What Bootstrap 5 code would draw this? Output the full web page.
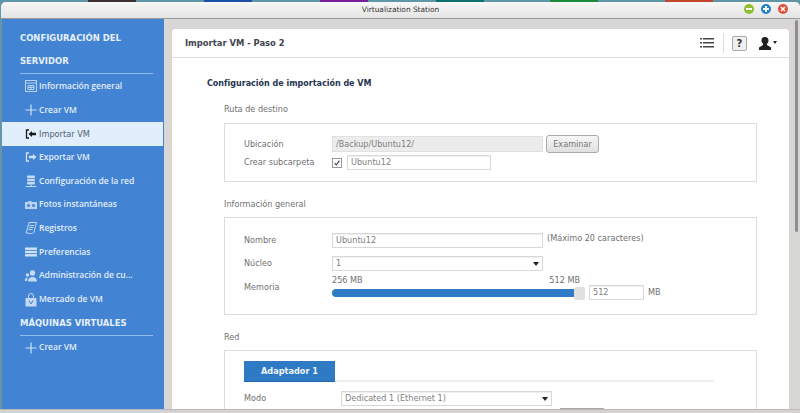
<!DOCTYPE html>
<html lang="es">
<head>
<meta charset="utf-8">
<title>Virtualization Station</title>
<link href="https://cdn.jsdelivr.net/npm/bootstrap@5.3.0/dist/css/bootstrap.min.css" rel="stylesheet">
<style>
html,body{height:413px;overflow:hidden}
body{background:#5f96a8;font-family:"DejaVu Sans",sans-serif;font-size:8.15px;color:#707070;position:relative}
.wall{height:2px}
.wall i{position:absolute;top:0;height:2px}
.vs-win{height:411px;margin-left:1px;background:#d9d7d5;border-radius:5px 5px 0 0;overflow:hidden}
.vs-title{height:17px;background:linear-gradient(#f7f7f7,#e4e4e4);border-bottom:1px solid #9a9a9a;font-size:7.4px;color:#333;position:relative}
.vs-dots{position:absolute;right:12px;top:2px;gap:7px}
.vs-dots svg{display:block}
.vs-body{height:390px}
.vs-side{width:163px;background:#4284d3;border-left:1px solid #6d93ad;color:#e8f1fb;flex:none}
.vs-head{margin:8px 11px .5px 18px;font-weight:700;color:#e6f0fb;font-size:8.45px;line-height:23px;border-bottom:1px solid #8fbcec}
.vs-head.second{margin-top:0;line-height:24px}
.vs-item{height:23.7px;padding-left:22px;gap:1px;font-family:"Open Sans",sans-serif;font-weight:600;font-size:8.5px;color:#e2edfa;white-space:nowrap}
.vs-item svg{width:14px;height:14px;flex:none}
.vs-item.on{background:#e1effc;color:#55616f;font-family:"DejaVu Sans",sans-serif;font-weight:400;font-size:8.2px;margin-right:1px}
.vs-item.tight{margin-top:-1px}
.vs-main{flex:1;padding:10px 0 0 8px;min-width:0}
.vs-panel{width:617px;height:400px;background:#fff;border-radius:4px 4px 0 0}
.vs-phead{height:29px;border-bottom:1px solid #ddd;padding:0 11px 0 13px;font-weight:700;font-size:8.4px;color:#3e4450}
.vs-sep{width:1px;height:20px;background:#ddd;margin:0 8px 0 9px}
.vs-q{width:15px;height:15px;border:1px solid #aaa;border-radius:2px;background:#f0f0f0;color:#333;font-size:10px;font-weight:700;line-height:13px;text-align:center;margin-right:11px}
.vs-content{padding:20px 33px 0 35px}
.vs-h{font-weight:700;color:#243450;font-size:8px;line-height:12px;margin-bottom:13px}
.vs-sec{margin-left:17px;line-height:12px;margin-bottom:7px}
.vs-sec.first{margin-bottom:8px}
.vs-box{margin-left:17px;border:1px solid #dcdcdc;padding:0 19px;width:533px;margin-bottom:16px}
.vs-box-a{height:59px;padding-top:11px}
.vs-box-b{height:98px;padding-top:15px}
.vs-box-c{height:80px;padding-top:10px}
.vs-row{display:flex;align-items:center}
.vs-lbl{width:88px;flex:none}
.vs-in{height:15px;border:1px solid #d8d8d8;background:#fff;padding:0 3px;line-height:13px;color:#808080;flex:none;display:flex;align-items:center;justify-content:space-between;box-shadow:inset 0 1px 1px #eee}
.vs-gray{background:#ececec;border-color:#e0e0e0;height:16px}
.vs-btn{width:53px;height:18px;border:1px solid #aaa;border-radius:3px;background:linear-gradient(#f6f6f6,#e0e0e0);color:#777;margin-left:3px;display:flex;align-items:center;justify-content:center}
.vs-chk{width:10px;height:10px;border:1px solid #999;background:#fff;margin-right:5px;flex:none;display:block}
.vs-w211{width:211px}
.vs-caret{width:0;height:0;border-left:3px solid transparent;border-right:3px solid transparent;border-top:4px solid #222}
.vs-track{width:253px;height:13px;position:relative;flex:none;margin-top:1px}
.vs-fill{position:absolute;left:0;top:2px;height:8px;width:242px;background:#2f7ac5;border-radius:4px 0 0 4px}
.vs-knob{position:absolute;left:242px;top:0;width:11px;height:13px;background:#e0e0e0;border-radius:2px}
.vs-ends{width:248px;display:flex;justify-content:space-between;line-height:11px}
.vs-tab{width:91px;height:21px;background:#2f7ac5;color:#eef5fc;font-weight:700;font-size:8.2px;display:flex;align-items:center;justify-content:center;border-bottom:1px solid #1f68b0}
.vs-tabline{border-bottom:2px solid #eee;flex:0 0 379px;height:21px}
.vs-scroll{position:absolute;left:795px;top:20px;width:3px;height:212px;background:#8d8d8d;border-radius:2px}
.vs-bottom{position:absolute;left:0;right:0;top:409px;height:4px;background:#d5d3d1;border-top:1px solid #b9b9b9}
.vs-strip{position:absolute;left:789px;top:19px;width:11px;height:390px;background:#d9d7d5}
.vs-edge{position:absolute;left:560px;top:408px;width:44px;height:1px;background:#aaa}
.vs-note{margin-left:4px;margin-top:-4px}
.vs-mem{margin-top:6px}
.vs-memr{margin-top:10px}
.vs-memr .vs-in{width:55px;margin-left:4px}
.vs-memr span{margin-left:4px}
.vs-h15{height:15px}
.vs-mb8{margin-bottom:8px}
.vs-mb4{margin-bottom:4px}
.vs-top{align-items:flex-start}
.vs-modo{margin-top:9px}
.vs-modo .vs-lbl{width:97px}
.vs-r18{height:18px;margin-bottom:2px}
.vs-w144{width:144px}
</style>
</head>
<body>
<div class="wall">
<i style="left:88px;width:48px;background:#3a3030"></i>
<i style="left:204px;width:48px;background:#1b4fa8"></i>
<i style="left:320px;width:48px;background:#7a1f9c"></i>
<i style="left:436px;width:48px;background:#0f7070"></i>
<i style="left:550px;width:48px;background:#1b8a3a"></i>
<i style="left:665px;width:48px;background:#c5442c"></i>
</div>
<div class="vs-win">
<div class="vs-title d-flex align-items-center justify-content-center">Virtualization Station
<div class="vs-dots d-flex">
<svg width="10" height="10" viewBox="0 0 10 10"><circle cx="5" cy="5" r="5" fill="#8fbf2e"/><rect x="2" y="4" width="6" height="2" fill="#fff"/></svg>
<svg width="10" height="10" viewBox="0 0 10 10"><circle cx="5" cy="5" r="5" fill="#1f7fc9"/><path d="M2 4h2V2h2v2h2v2H6v2H4V6H2z" fill="#fff"/></svg>
<svg width="10" height="10" viewBox="0 0 10 10"><circle cx="5" cy="5" r="5" fill="#e2503c"/><path d="M3 3l4 4M7 3l-4 4" stroke="#fff" stroke-width="1.6"/></svg>
</div>
</div>
<div class="vs-body d-flex">
<nav class="vs-side">
<div class="vs-head">CONFIGURACIÓN DEL<br>SERVIDOR</div>
<div>
<div class="vs-item d-flex align-items-center"><svg viewBox="0 0 14 14" fill="none" stroke="#b9d3f2"><rect x="1.500" y="1.500" width="11" height="11"/><path d="M1.500 4h11M4 6.500h6v4H4zM4 8.500h6M7 6.500v4"/></svg>Información general</div>
<div class="vs-item d-flex align-items-center"><svg viewBox="0 0 14 14" stroke="#cfe2f8" stroke-width="1.200"><path d="M7 1.500v11M1.500 7h11"/></svg>Crear VM</div>
<div class="vs-item on d-flex align-items-center"><svg viewBox="0 0 14 14" fill="none" stroke="#1a1a1a"><path d="M5 3H2.500v8H5" stroke-width="1.300"/><path d="M4.500 7l3.500-3v1.800h4v2.400H8V10z" fill="#1a1a1a" stroke="none"/></svg>Importar VM</div>
<div class="vs-item d-flex align-items-center"><svg viewBox="0 0 14 14" fill="none" stroke="#cfe2f8"><path d="M5 3H2.500v8H5" stroke-width="1.300"/><path d="M12.500 7L9 4v1.800H5v2.400h4V10z" fill="#cfe2f8" stroke="none"/></svg>Exportar VM</div>
<div class="vs-item d-flex align-items-center"><svg viewBox="0 0 14 14" fill="#c3d9f4"><rect x="3" y="1.500" width="8" height="2.500" rx="1"/><rect x="3" y="4.800" width="8" height="2.500" rx="1"/><rect x="3" y="8" width="8" height="2.500" rx="1"/><rect x="6.500" y="10.500" width="1" height="2"/><rect x="1.500" y="12" width="11" height="1"/></svg>Configuración de la red</div>
<div class="vs-item d-flex align-items-center"><svg viewBox="0 0 14 14" fill="#b9d3f2"><path d="M1 4h3l1-1h2l1 1h5v7H1z"/><circle cx="4.500" cy="7.500" r="1.500" fill="#4284d3"/><circle cx="9.500" cy="7.500" r="1.500" fill="#4284d3"/></svg>Fotos instantáneas</div>
<div class="vs-item d-flex align-items-center"><svg viewBox="0 0 14 14" fill="none" stroke="#c3d9f4"><path d="M5 1.500h7.500L10 11c-.5 1.500-2 2-3.500 1.500L2 12l1-3z"/><path d="M5.500 4.500h4.500M5 6.500h4.500M4.500 8.500h4"/></svg>Registros</div>
<div class="vs-item d-flex align-items-center"><svg viewBox="0 0 14 14" fill="#cfe2f8"><rect x="1" y="2.500" width="12" height="2.400"/><rect x="1" y="5.800" width="12" height="2.400"/><rect x="1" y="9.100" width="12" height="2.400"/></svg>Preferencias</div>
<div class="vs-item d-flex align-items-center"><svg viewBox="0 0 14 14" fill="#c3d9f4"><circle cx="8.500" cy="4" r="2.700"/><path d="M4 12.500c0-3 2-4.500 4.500-4.500s4.500 1.500 4.500 4.500z"/><circle cx="3.500" cy="6" r="1.800"/><path d="M.8 12c0-2 1-3.500 2.700-3.500L3 12z"/></svg>Administración de cu...</div>
<div class="vs-item d-flex align-items-center"><svg viewBox="0 0 14 14" fill="#c3d9f4"><path d="M1.500 5h11v8.500h-11z"/><path d="M4.500 5V3a2.500 2.500 0 015 0v2" fill="none" stroke="#c3d9f4"/><path d="M5 7.500l2 3.500 2-3.500" fill="none" stroke="#4284d3"/></svg>Mercado de VM</div>
</div>
<div class="vs-head second">MÁQUINAS VIRTUALES</div>
<div class="vs-item tight d-flex align-items-center"><svg viewBox="0 0 14 14" stroke="#cfe2f8" stroke-width="1.200"><path d="M7 1.500v11M1.500 7h11"/></svg>Crear VM</div>
</nav>
<main class="vs-main">
<div class="vs-panel">
<div class="vs-phead d-flex align-items-center justify-content-between">
<span>Importar VM - Paso 2</span>
<div class="d-flex align-items-center">
<svg width="14" height="10" viewBox="0 0 14 10" fill="#444"><rect y="0" width="2" height="1.500"/><rect x="3" y="0" width="11" height="1.500"/><rect y="4" width="2" height="1.500"/><rect x="3" y="4" width="11" height="1.500"/><rect y="8" width="2" height="1.500"/><rect x="3" y="8" width="11" height="1.500"/></svg>
<div class="vs-sep"></div>
<div class="vs-q">?</div>
<svg width="20" height="13" viewBox="0 0 20 13" fill="#222"><circle cx="7" cy="3.500" r="3.500"/><path d="M5 6h4v2l4 2.500V13H1v-2.500L5 8z"/><path d="M15 4h4l-2 3z"/></svg>
</div>
</div>
<div class="vs-content">
<div class="vs-h">Configuración de importación de VM</div>
<div class="vs-sec first">Ruta de destino</div>
<div class="vs-box vs-box-a">
<div class="vs-row vs-r18"><div class="vs-lbl">Ubicación</div><div class="vs-in vs-gray vs-w211">/Backup/Ubuntu12/</div><div class="vs-btn">Examinar</div></div>
<div class="vs-row vs-h15"><div class="vs-lbl">Crear subcarpeta</div>
<svg class="vs-chk" viewBox="0 0 10 10" fill="none" stroke="#333" stroke-width="1.300"><path d="M2 5l2 2.500L8 2"/></svg>
<div class="vs-in vs-w144">Ubuntu12</div></div>
</div>
<div class="vs-sec">Información general</div>
<div class="vs-box vs-box-b">
<div class="vs-row vs-h15 vs-mb8"><div class="vs-lbl">Nombre</div><div class="vs-in vs-w211">Ubuntu12</div><span class="vs-note">(Máximo 20 caracteres)</span></div>
<div class="vs-row vs-h15 vs-mb4"><div class="vs-lbl">Núcleo</div><div class="vs-in vs-w211">1<i class="vs-caret"></i></div></div>
<div class="vs-row vs-top">
<div class="vs-lbl vs-mem">Memoria</div>
<div>
<div class="vs-ends"><span>256 MB</span><span>512 MB</span></div>
<div class="vs-track"><div class="vs-fill"></div><div class="vs-knob"></div></div>
</div>
<div class="vs-row vs-memr"><div class="vs-in">512</div><span>MB</span></div>
</div>
</div>
<div class="vs-sec">Red</div>
<div class="vs-box vs-box-c">
<div class="d-flex"><div class="vs-tab">Adaptador 1</div><div class="vs-tabline"></div></div>
<div class="vs-row vs-modo"><div class="vs-lbl">Modo</div><div class="vs-in vs-w211">Dedicated 1 (Ethernet 1)<i class="vs-caret"></i></div></div>
</div>
</div>
</div>
</main>
</div>
</div>
<div class="vs-strip"></div>
<div class="vs-scroll"></div>
<div class="vs-edge"></div>
<div class="vs-bottom"></div>
</body>
</html>
